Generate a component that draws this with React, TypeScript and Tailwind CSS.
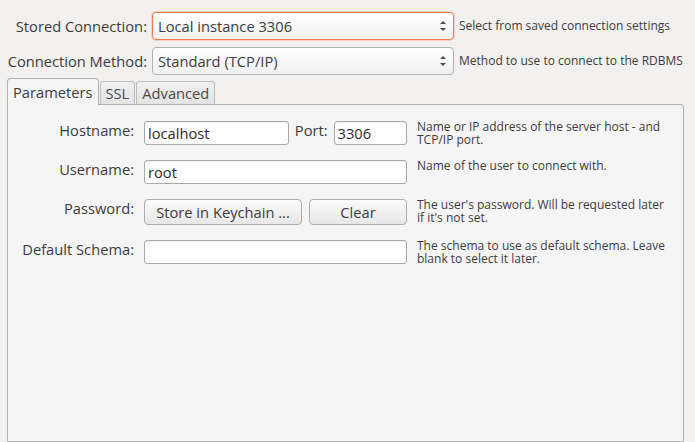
import React from 'react'

const font = { fontFamily: '"Open Sans", "Liberation Sans", sans-serif' }

function Spinner() {
  return (
    <svg width="8" height="14" viewBox="0 0 8 14" className="shrink-0">
      <path d="M1 5 L4 2 L7 5 Z" fill="#4a4a4a" />
      <path d="M1 9 L4 12 L7 9 Z" fill="#4a4a4a" />
    </svg>
  )
}

function Combo({ value, focused }: { value: string; focused?: boolean }) {
  return (
    <div
      className={`flex h-[28px] items-center justify-between rounded-[4px] border bg-gradient-to-b from-white to-[#f1f1f1] pl-[5px] pr-[6px] text-[14.7px] text-[#3c3c3c] ${
        focused ? 'border-[#ef7a4f] shadow-[0_0_0_1px_rgba(240,119,70,0.25)]' : 'border-[#b3b3b3]'
      }`}
    >
      <span>{value}</span>
      <Spinner />
    </div>
  )
}

function Field({ value, className = '' }: { value?: string; className?: string }) {
  return (
    <div
      className={`flex h-[24px] items-center rounded-[3px] border border-[#a9a9a9] bg-white px-[3px] text-[14.7px] text-[#2b2b2b] shadow-[inset_0_1px_1px_rgba(0,0,0,0.06)] ${className}`}
    >
      {value}
    </div>
  )
}

function Button({ label, className = '' }: { label: string; className?: string }) {
  return (
    <div
      className={`flex h-[26px] items-center justify-center rounded-[4px] border border-[#adadad] bg-gradient-to-b from-[#fbfbfb] to-[#e7e7e7] text-[14.7px] text-[#3c3c3c] ${className}`}
    >
      {label}
    </div>
  )
}

function Help({ children }: { children: React.ReactNode }) {
  return <div className="-mt-[1px] h-[24px] text-[12px] leading-[13px] text-[#3c3c3c]">{children}</div>
}

function Label({ children }: { children: React.ReactNode }) {
  return <div className="text-right text-[14.7px] leading-[18px] text-[#3c3c3c]">{children}</div>
}

export default function App() {
  return (
    <div style={font} className="flex h-[442px] w-[695px] flex-col overflow-hidden bg-[#f2f1f0]">
      {/* Top settings */}
      <div className="grid grid-cols-[147px_302px_1fr] items-center gap-x-[5px] gap-y-[7px] pt-[12px]">
        <div className="text-right text-[14.7px] text-[#3c3c3c]">Stored Connection:</div>
        <Combo value="Local instance 3306" focused />
        <div className="whitespace-nowrap text-[12px] text-[#3c3c3c]">Select from saved connection settings</div>
        <div className="text-right text-[14.7px] text-[#3c3c3c]">Connection Method:</div>
        <Combo value="Standard (TCP/IP)" />
        <div className="whitespace-nowrap text-[12px] text-[#3c3c3c]">Method to use to connect to the RDBMS</div>
      </div>

      {/* Tabs */}
      <div className="mt-[3px] flex items-end gap-[1px] pl-[7px]">
        <div className="relative z-10 -mb-px flex h-[27px] items-center rounded-t-[4px] border border-b-0 border-[#b0b0b0] bg-[#f5f5f5] px-[5px] text-[14.7px] text-[#3c3c3c]">
          Parameters
        </div>
        <div className="flex h-[23px] items-center rounded-t-[3px] border border-b-0 border-[#bdbdbd] bg-gradient-to-b from-[#f0f0f0] to-[#e3e3e3] px-[5px] text-[14.7px] text-[#4a4a4a]">
          SSL
        </div>
        <div className="flex h-[23px] items-center rounded-t-[3px] border border-b-0 border-[#bdbdbd] bg-gradient-to-b from-[#f0f0f0] to-[#e3e3e3] px-[5px] text-[14.7px] text-[#4a4a4a]">
          Advanced
        </div>
      </div>

      {/* Panel */}
      <div className="ml-[7px] w-[677px] flex-1 rounded-tr-[3px] border border-[#b0b0b0] bg-[#f5f5f5]">
        <div className="grid grid-cols-[126px_263px_1fr] gap-x-[10px] gap-y-[15px] pt-[16px]">
          <Label>Hostname:</Label>
          <div className="flex items-start gap-[6px]">
            <Field value="localhost" className="w-[146px]" />
            <div className="text-[14.7px] leading-[18px] text-[#3c3c3c]">Port:</div>
            <Field value="3306" className="ml-auto w-[74px]" />
          </div>
          <Help>
            <div>Name or IP address of the server host - and</div>
            <div>TCP/IP port.</div>
          </Help>

          <Label>Username:</Label>
          <Field value="root" />
          <Help>Name of the user to connect with.</Help>

          <Label>Password:</Label>
          <div className="flex gap-[7px]">
            <Button label="Store in Keychain ..." className="w-[158px]" />
            <Button label="Clear" className="w-[98px]" />
          </div>
          <Help>
            <div>The user's password. Will be requested later</div>
            <div>if it's not set.</div>
          </Help>

          <Label>Default Schema:</Label>
          <Field />
          <Help>
            <div>The schema to use as default schema. Leave</div>
            <div>blank to select it later.</div>
          </Help>
        </div>
      </div>
    </div>
  )
}
